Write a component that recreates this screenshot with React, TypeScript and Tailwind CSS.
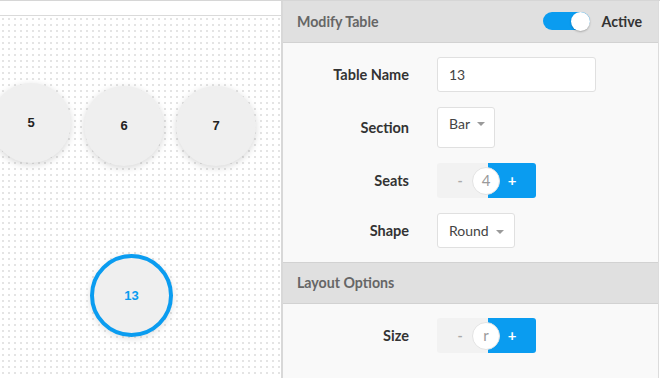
import React from "react";

const Caret = () => (
  <span className="ml-[7px] mt-[2px] inline-block h-0 w-0 border-x-[4px] border-t-[4px] border-x-transparent border-t-[#9a9a9a]" />
);

const Stepper = ({ value }: { value: string }) => (
  <div className="relative flex h-[35px] w-[99px]">
    <div className="flex w-[51px] items-center bg-[#f2f2f2] rounded-l-[3px]">
      <span className="w-[46px] text-center text-[14px] font-bold text-[#aaa]">-</span>
    </div>
    <div className="flex flex-1 items-center justify-center rounded-r-[3px] bg-[#0a9cf0] text-[15px] font-bold text-white">
      +
    </div>
    {/* value bubble sits over the seam */}
    <div className="absolute left-[35px] top-[3.5px] flex h-[28px] w-[28px] items-center justify-center rounded-full border border-[#e3e3e3] bg-white text-[15px] text-[#9a9a9a]">
      {value}
    </div>
  </div>
);

const Row = ({ label, children }: { label: string; children: React.ReactNode }) => (
  <div className="flex items-center">
    <div className="w-[126px] text-right text-[14.5px] font-bold text-[#333]">{label}</div>
    <div className="ml-[28px]">{children}</div>
  </div>
);

const Seat = ({ n, className }: { n: string; className: string }) => (
  <div
    className={`absolute flex h-[80px] w-[80px] items-center justify-center rounded-full bg-[#efefef] text-[13px] font-bold text-[#222] shadow-[0_2px_7px_rgba(0,0,0,0.16)] ${className}`}
    style={{ fontFamily: '"Liberation Sans", Arial, sans-serif' }}
  >
    {n}
  </div>
);

export default function App() {
  return (
    <div
      className="flex h-[378px] w-[660px] overflow-hidden border-t border-[#d6d6d6] bg-white"
      style={{ fontFamily: "Lato, 'Open Sans', sans-serif" }}
    >
      {/* Floor canvas */}
      <div className="flex w-[283px] flex-col border-r-2 border-[#d8d8d8]">
        <div className="h-[15px] border-b border-[#dadada] bg-white" />
        <div className="relative flex-1 overflow-hidden bg-white bg-[radial-gradient(#e4e4e4_0.8px,transparent_1px)] bg-[size:6px_6px]">
          <Seat n="5" className="left-[-9px] top-[67px]" />
          <Seat n="6" className="left-[84px] top-[70px]" />
          <Seat n="7" className="left-[176px] top-[70px]" />
          <div
            className="absolute left-[90px] top-[238px] flex h-[83px] w-[83px] items-center justify-center rounded-full border-[4px] border-[#0a9cf0] bg-[#efefef] text-[13px] font-bold text-[#0a9cf0] shadow-[0_2px_7px_rgba(0,0,0,0.12)]"
            style={{ fontFamily: '"Liberation Sans", Arial, sans-serif' }}
          >
            13
          </div>
        </div>
      </div>

      {/* Properties panel */}
      <div className="mr-[1px] flex flex-1 flex-col border-r border-[#dcdcdc] bg-[#f9f9f9]">
        <div className="flex h-[42px] items-center justify-between border-b border-[#d2d2d2] bg-[#e0e0e0] pl-[14px] pr-[16px]">
          <span className="text-[14.2px] font-bold text-[#666]">Modify Table</span>
          <div className="flex items-center">
            <div className="flex h-[18px] w-[47px] items-center justify-end rounded-full bg-[#0a9cf0]">
              <div className="h-[19px] w-[19px] rounded-full bg-white shadow-[0_1px_2px_rgba(0,0,0,0.25)]" />
            </div>
            <span className="ml-[12px] text-[14.2px] font-bold text-[#333]">Active</span>
          </div>
        </div>

        <div className="flex flex-col gap-[15px] pb-[14px] pt-[14px]">
          <Row label="Table Name">
            <div className="flex h-[35px] w-[159px] items-center rounded-[3px] border border-[#e0e0e0] bg-white px-[11px] text-[14px] text-[#444]">
              13
            </div>
          </Row>
          <Row label="Section">
            <div className="flex h-[41px] w-[58px] items-start rounded-[3px] border border-[#e0e0e0] bg-white px-[11px] pt-[5px] text-[14px] text-[#444]">
              Bar
              <span className="mt-[7px] flex">
                <Caret />
              </span>
            </div>
          </Row>
          <Row label="Seats">
            <Stepper value="4" />
          </Row>
          <Row label="Shape">
            <div className="flex h-[35px] w-[78px] items-center rounded-[3px] border border-[#e0e0e0] bg-white px-[11px] text-[14px] text-[#444]">
              Round
              <Caret />
            </div>
          </Row>
        </div>

        <div className="flex h-[42px] items-center border-y border-[#d2d2d2] bg-[#e0e0e0] px-[14px]">
          <span className="text-[14.2px] font-bold text-[#666]">Layout Options</span>
        </div>

        <div className="pt-[14px]">
          <Row label="Size">
            <Stepper value="r" />
          </Row>
        </div>
      </div>
    </div>
  );
}
